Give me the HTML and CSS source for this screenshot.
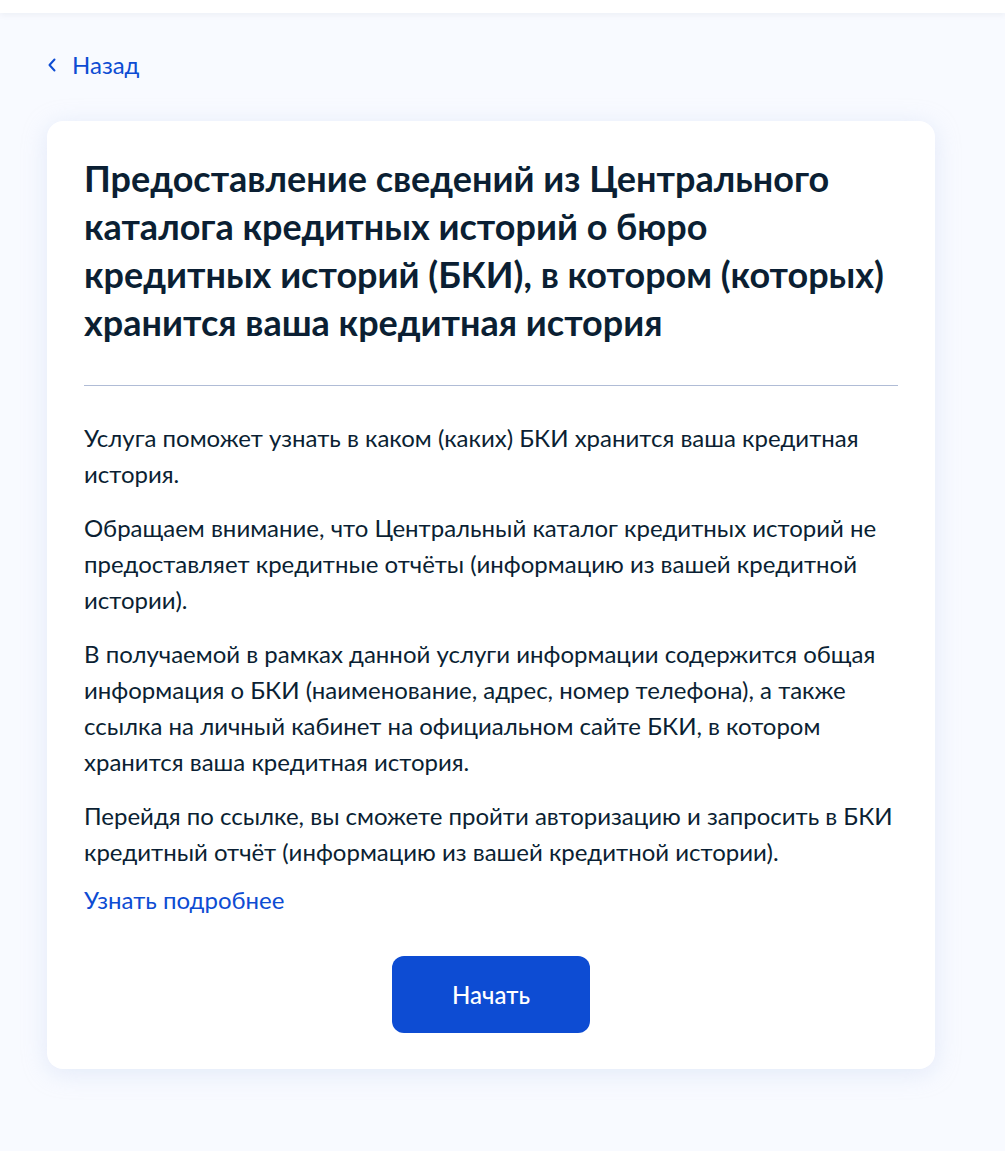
FILE: index.html
```html
<!DOCTYPE html>
<html lang="ru">
<head>
<meta charset="utf-8">
<title>Центральный каталог кредитных историй</title>
<link rel="stylesheet" href="styles.css">
</head>
<body>
<header class="topbar"></header>
<main class="page">
  <a class="back" href="#">
    <svg class="back-icon" width="10" height="14" viewBox="0 0 10 14"><path d="M7.5 1.5 L2.5 7 L7.5 12.5" fill="none" stroke="#0d4cd3" stroke-width="2" stroke-linecap="round" stroke-linejoin="round"/></svg>
    <span>Назад</span>
  </a>
  <section class="card">
    <h1 class="title">Предоставление сведений из Центрального каталога кредитных историй о бюро кредитных историй (БКИ), в котором (которых) хранится ваша кредитная история</h1>
    <hr class="divider">
    <div class="text">
      <p>Услуга поможет узнать в каком (каких) БКИ хранится ваша кредитная история.</p>
      <p>Обращаем внимание, что Центральный каталог кредитных историй не предоставляет кредитные отчёты (информацию из вашей кредитной истории).</p>
      <p>В получаемой в рамках данной услуги информации содержится общая информация о БКИ (наименование, адрес, номер телефона), а также ссылка на личный кабинет на официальном сайте БКИ, в котором хранится ваша кредитная история.</p>
      <p>Перейдя по ссылке, вы сможете пройти авторизацию и запросить в БКИ кредитный отчёт (информацию из вашей кредитной истории).</p>
    </div>
    <a class="more" href="#">Узнать подробнее</a>
    <div class="actions">
      <button class="start" type="button">Начать</button>
    </div>
  </section>
</main>
</body>
</html>
```

FILE: styles.css
```css
* { box-sizing: border-box; }
html, body { margin: 0; padding: 0; }
body {
  background: #f8faff;
  font-family: Lato, "Noto Sans", sans-serif;
  color: #0b1f33;
  min-height: 1151px;
}
.topbar {
  height: 13px;
  background: #ffffff;
  box-shadow: 0 2px 6px rgba(11, 31, 51, 0.05);
}
.page {
  padding: 38px 70px 80px 47px;
}
.back {
  display: inline-flex;
  align-items: center;
  gap: 15px;
  color: #0d4cd3;
  text-decoration: none;
  font-size: 24px;
  line-height: 28px;
}
.back-icon { display: block; }
.card {
  margin-top: 42px;
  background: #ffffff;
  border-radius: 16px;
  box-shadow: 0 4px 24px rgba(186, 203, 235, 0.35);
  padding: 33px 37px 36px 37px;
  width: 888px;
}
.title {
  margin: 0;
  font-size: 36px;
  line-height: 48px;
  font-weight: 700;
  color: #0b1f33;
}
.divider {
  margin: 39px 0 34px;
  border: 0;
  border-top: 1px solid #b0bcd6;
}
.text p {
  margin: 0 0 18px;
  font-size: 24px;
  line-height: 36px;
}
.text p:last-child { margin-bottom: 12px; }
.more {
  display: inline-block;
  color: #0d4cd3;
  text-decoration: none;
  font-size: 24px;
  line-height: 36px;
}
.actions {
  display: flex;
  justify-content: center;
  margin-top: 38px;
}
.start {
  width: 198px;
  height: 77px;
  border: 0;
  border-radius: 12px;
  background: #0d4cd3;
  color: #ffffff;
  font-family: Lato, "Noto Sans", sans-serif;
  font-size: 24px;
  font-weight: 500;
}
```
